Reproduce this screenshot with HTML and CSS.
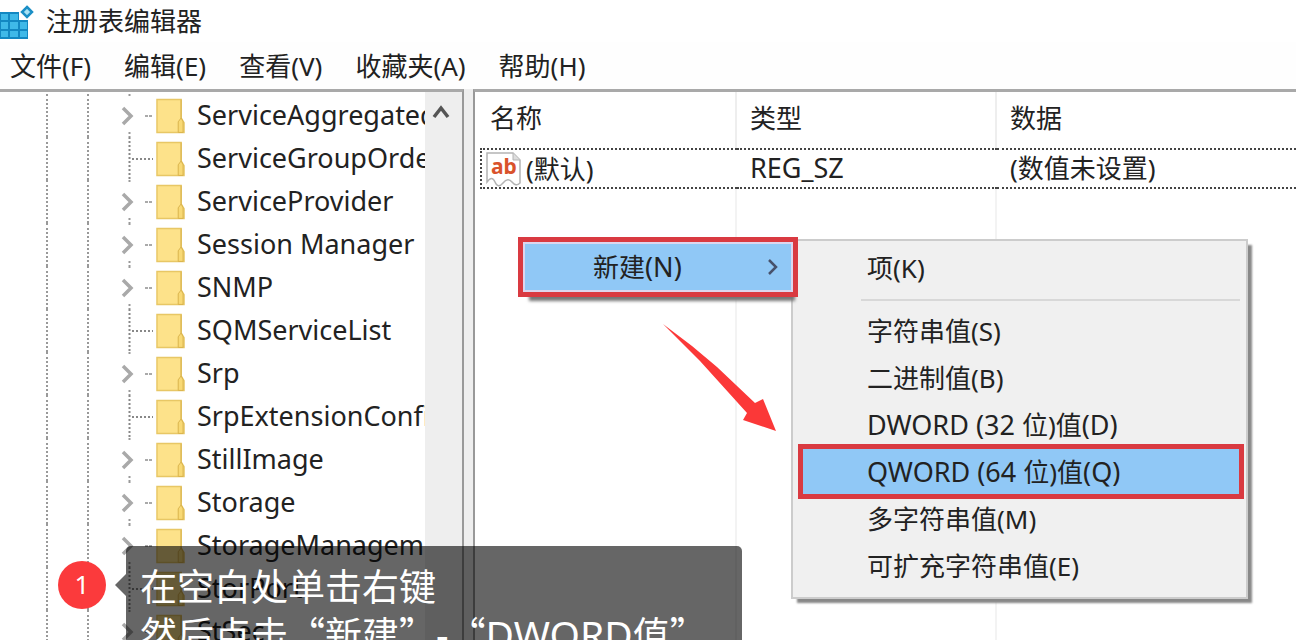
FILE: index.html
```
<!DOCTYPE html>
<html lang="zh-CN">
<head>
<meta charset="utf-8">
<title>注册表编辑器</title>
<link rel="stylesheet" href="styles.css">
</head>
<body>
<svg class="defs" width="0" height="0" aria-hidden="true">
  <symbol id="folder" viewBox="0 0 30 36">
    <path d="M1 1h25v19l3 5v10H1z" fill="#fde28a" stroke="#e8c765" stroke-width="1.5"/>
    <path d="M26 1v19l-3 4v11h5V24l-2-4" fill="#f8d975" stroke="#d9b24c" stroke-width="1"/>
  </symbol>
  <symbol id="branch" viewBox="0 0 36 43">
    <path d="M3 14l8 8-8 8" fill="none" stroke="#a9a9a9" stroke-width="3.500"/>
    <path d="M9.500 0v4M9.500 38v5" stroke="#999" stroke-width="2" stroke-dasharray="2 2"/>
    <path d="M25 22h8" stroke="#aaa" stroke-width="2" stroke-dasharray="3 1"/>
  </symbol>
  <symbol id="leaf" viewBox="0 0 36 43">
    <path d="M9.500 0v43M12 22h21" fill="none" stroke="#888" stroke-width="2" stroke-dasharray="2 2"/>
  </symbol>
</svg>

<header class="titlebar">
  <svg class="app-icon" viewBox="0 0 34 38" aria-hidden="true">
    <path d="M0 10h19v8h9v19H0z" fill="#1388c2"/>
    <path d="M1 12h7v6H1zM10 12h8v6h-8zM1 20h7v7H1zM10 20h8v7h-8zM20 20h7v7h-7zM1 29h7v6H1zM10 29h8v6h-8zM20 29h7v6h-7z" fill="#3fb9e8"/>
    <path d="M27 5l5 5-5 5-5-5z" fill="#a8e2f5" stroke="#1b8fc6" stroke-width="2.500"/>
  </svg>
  <h1 class="title">注册表编辑器</h1>
</header>
<nav class="menubar">
  <button>文件(F)</button><button>编辑(E)</button><button>查看(V)</button><button>收藏夹(A)</button><button>帮助(H)</button>
</nav>

<main class="panes">
  <section class="tree-pane">
    <ul class="tree">
      <li><button aria-label="展开"><svg><use href="#branch"/></svg></button><svg class="folder"><use href="#folder"/></svg><span>ServiceAggregatedEvents</span></li>
      <li><svg class="leaf"><use href="#leaf"/></svg><svg class="folder"><use href="#folder"/></svg><span>ServiceGroupOrder</span></li>
      <li><button aria-label="展开"><svg><use href="#branch"/></svg></button><svg class="folder"><use href="#folder"/></svg><span>ServiceProvider</span></li>
      <li><button aria-label="展开"><svg><use href="#branch"/></svg></button><svg class="folder"><use href="#folder"/></svg><span>Session Manager</span></li>
      <li><button aria-label="展开"><svg><use href="#branch"/></svg></button><svg class="folder"><use href="#folder"/></svg><span>SNMP</span></li>
      <li><svg class="leaf"><use href="#leaf"/></svg><svg class="folder"><use href="#folder"/></svg><span>SQMServiceList</span></li>
      <li><button aria-label="展开"><svg><use href="#branch"/></svg></button><svg class="folder"><use href="#folder"/></svg><span>Srp</span></li>
      <li><svg class="leaf"><use href="#leaf"/></svg><svg class="folder"><use href="#folder"/></svg><span>SrpExtensionConfig</span></li>
      <li><button aria-label="展开"><svg><use href="#branch"/></svg></button><svg class="folder"><use href="#folder"/></svg><span>StillImage</span></li>
      <li><button aria-label="展开"><svg><use href="#branch"/></svg></button><svg class="folder"><use href="#folder"/></svg><span>Storage</span></li>
      <li><button aria-label="展开"><svg><use href="#branch"/></svg></button><svg class="folder"><use href="#folder"/></svg><span>StorageManagement</span></li>
      <li><svg class="leaf"><use href="#leaf"/></svg><svg class="folder"><use href="#folder"/></svg><span>StorPort</span></li>
      <li><button aria-label="展开"><svg><use href="#branch"/></svg></button><svg class="folder"><use href="#folder"/></svg><span>StSec</span></li>
    </ul>
    <div class="scrollbar">
      <button aria-label="向上滚动"><svg width="20" height="16" viewBox="0 0 20 16"><path d="M3 13l7-9 7 9" fill="none" stroke="#555" stroke-width="3.500"/></svg></button>
    </div>
  </section>

  <section class="value-pane">
    <table class="values">
      <thead><tr><th class="col-name">名称</th><th class="col-type">类型</th><th>数据</th></tr></thead>
      <tbody>
        <tr class="entry">
          <td><div class="name-cell"><svg class="ab" viewBox="0 0 36 36" aria-hidden="true">
            <path d="M1 2h26l7 7v23q-4 4-8-1t-9 1-8-1-8 0z" fill="#fff" stroke="#b4b4b4" stroke-width="1.500"/>
            <path d="M27 2v7h7" fill="#ddd" stroke="#b4b4b4"/>
            <text x="5" y="23" class="ab-text">ab</text></svg><span>(默认)</span></div></td>
          <td><span class="latin">REG_SZ</span></td><td>(数值未设置)</td>
        </tr>
        <tr class="rest"><td></td><td></td><td></td></tr>
      </tbody>
    </table>
  </section>
</main>

<div class="submenu" role="menu">
  <button>项(K)</button>
  <hr>
  <button>字符串值(S)</button>
  <button>二进制值(B)</button>
  <button><span class="latin">DWORD (32 </span>位)值<span class="latin">(D)</span></button>
  <button class="marked"><span class="latin">QWORD (64 </span>位)值<span class="latin">(Q)</span></button>
  <button>多字符串值(M)</button>
  <button>可扩充字符串值(E)</button>
</div>
<button class="context-item"><span>新建<span class="latin">(N)</span></span><svg width="14" height="18" viewBox="0 0 14 18"><path d="M3 2l7 7-7 7" fill="none" stroke="#47516b" stroke-width="2.500"/></svg></button>

<svg class="arrow" width="116" height="108" viewBox="0 0 116 108" aria-hidden="true"><path d="M1 0L30 22 55 43 93 79l8-4 13 32-33-11 4-7-47-52z" fill="#fb3838"/></svg>

<div class="badge">1</div>
<div class="callout">在空白处单击右键<br>然后点击“新建”<span class="callout-latin">-</span>“<span class="callout-latin">DWORD</span>值”</div>
</body>
</html>
```
FILE: styles.css
```
*, *::before { box-sizing: border-box; }
html, body { height: 100%; margin: 0; }
body {
  position: relative;
  display: flex;
  flex-direction: column;
  overflow: hidden;
  background: #fff;
  color: #222;
  font: 26px/32px "Noto Sans", "Noto Sans CJK SC", sans-serif;
}
button {
  margin: 0;
  padding: 0;
  border: 0;
  background: none;
  color: inherit;
  font: inherit;
  text-align: left;
}
svg { display: block; flex: none; }
.defs { position: absolute; }
.latin { font-size: 27px; }

.titlebar { display: flex; align-items: center; flex: none; gap: 12px; height: 42px; }
.app-icon { width: 34px; height: 38px; }
.title { margin: 0; font-size: 26px; font-weight: 400; }
.menubar { display: flex; align-items: center; flex: none; gap: 33px; height: 47px; padding: 0 10px; background: #fefefe; }

.panes { display: flex; flex: 1; min-height: 0; gap: 9px; overflow: hidden; background: #eee; }
.tree-pane {
  display: flex;
  flex: none;
  width: 464px;
  overflow: hidden;
  border-top: 3px solid #a9a9a9;
  border-right: 2px solid #999;
  background: #fff;
}
.tree { flex: 1; min-width: 0; margin: 0; padding: 2px 0 0; list-style: none; overflow: hidden; }
.tree li { display: flex; align-items: center; height: 43px; padding-left: 120px; position: relative; }
.tree li::before {
  content: "";
  position: absolute;
  left: 46px;
  top: 0;
  width: 43px;
  height: 43px;
  border: 0 dotted #999;
  border-width: 0 2px;
}
.tree li button svg, .leaf { width: 36px; height: 43px; }
.folder { width: 29px; height: 36px; margin-right: 12px; }
.tree span { padding-bottom: 2px; font-size: 27px; white-space: nowrap; }
.scrollbar { flex: none; width: 37px; padding: 2px 0 0 6px; background: #eee; }

.value-pane {
  flex: 1;
  min-width: 0;
  padding-left: 5px;
  border-top: 3px solid #a9a9a9;
  border-left: 2px solid #999;
  background: #fff;
}
.values { width: 100%; height: 100%; border-spacing: 0; table-layout: fixed; }
.values th { height: 56px; padding: 0 0 4px 10px; border-right: 2px solid #eee; font-weight: 400; text-align: left; }
.col-name { width: 257px; }
.col-type { width: 260px; }
.values th:not(:first-child), .values td:not(:first-child) { padding-left: 13px; }
.values th:last-child { border-right: 0; }
.entry td { height: 41px; padding: 0 0 2px; border: 0 dotted #444; border-width: 2px 0; }
.entry td:first-child { padding: 0 0 0 4px; border-left-width: 2px; }
.name-cell { display: flex; align-items: center; gap: 4px; }
.ab { width: 36px; height: 36px; }
.ab-text { font: bold 21px "Noto Sans", sans-serif; fill: #d9532c; }
.rest td { border-right: 2px solid #f3f3f3; }
.rest td:last-child { border-right: 0; }

.submenu {
  position: absolute;
  left: 791px;
  top: 239px;
  display: flex;
  flex-direction: column;
  width: 457px;
  padding: 3px 2px 8px 6px;
  border: 2px solid #ccc;
  background: #f0f0f0;
  box-shadow: 5px 5px 2px -1px #888;
}
.submenu button { height: 47px; padding-left: 68px; white-space: pre; }
.submenu hr { width: calc(100% - 66px); height: 2px; margin: 8px 0 6px 62px; border: 0; background: #d8d8d8; }
.submenu .marked { height: 55px; margin: -4px 0 -4px -1px; padding-left: 64px; border: 5px solid #d93a41; background: #90c8f6; }
.context-item {
  position: absolute;
  left: 518px;
  top: 237px;
  display: flex;
  align-items: center;
  justify-content: space-between;
  width: 280px;
  height: 60px;
  padding: 0 13px 0 70px;
  border: 5px solid #d93a41;
  background: #90c8f6;
  box-shadow: inset 0 0 0 2px #dcd6ee, 4px 11px 3px -7px #777;
}
.arrow { position: absolute; left: 662px; top: 324px; }
.badge {
  position: absolute;
  left: 58px;
  top: 561px;
  width: 48px;
  height: 48px;
  border-radius: 50%;
  background: #fb3a3c;
  color: #fff;
  line-height: 46px;
  text-align: center;
}
.callout {
  position: absolute;
  left: 126px;
  top: 546px;
  width: 616px;
  padding: 15px 14px;
  border-radius: 5px;
  background: rgba(0, 0, 0, .6);
  color: #fff;
  font: 37px/48px "Noto Sans CJK SC", sans-serif;
  white-space: nowrap;
}
.callout::before {
  content: "";
  position: absolute;
  left: -11px;
  top: 28px;
  border: solid transparent;
  border-width: 11px 11px 11px 0;
  border-right-color: rgba(0, 0, 0, .6);
}
.callout-latin { font: 39px/40px "Noto Sans", sans-serif; }
```
